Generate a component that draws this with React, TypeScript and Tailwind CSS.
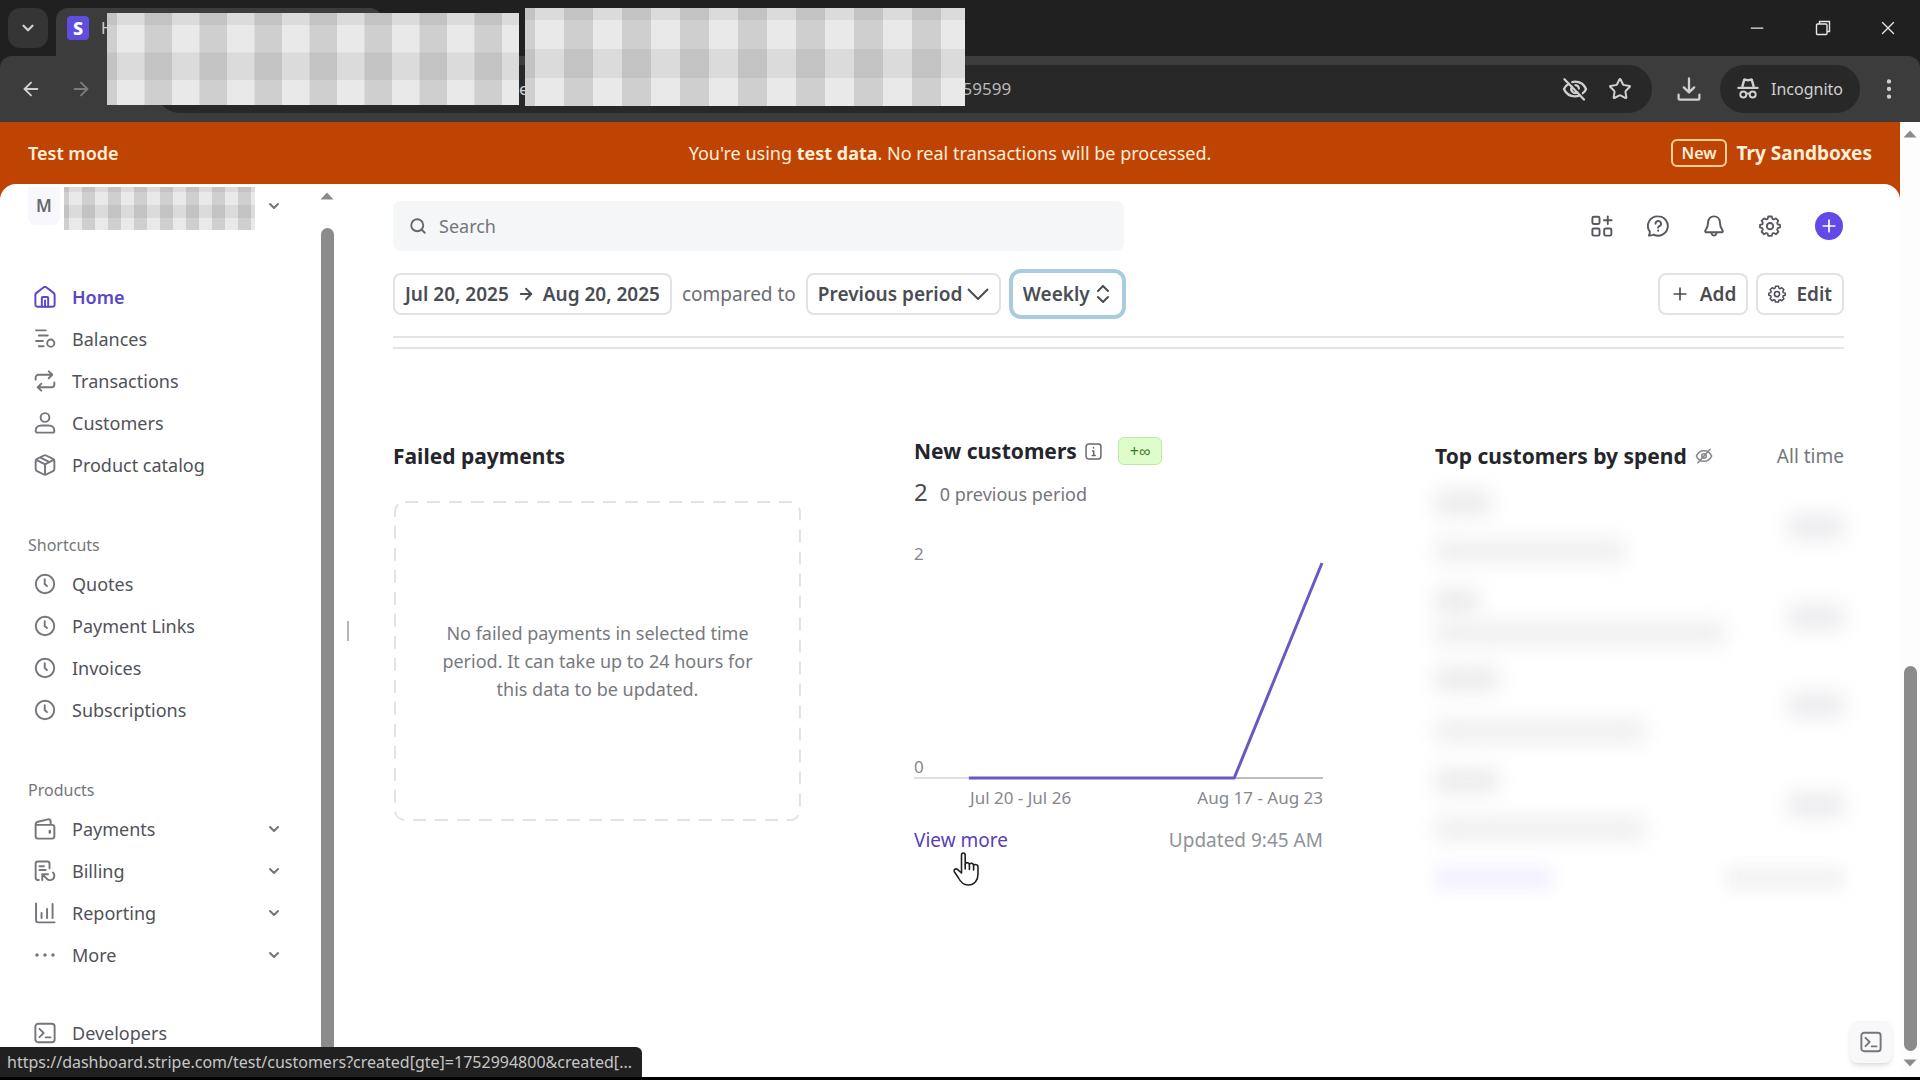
import type { ReactNode } from 'react';
import { ArrowLeft, ArrowRight, ChevronDown, Minus, MoreVertical, Plus, Search, Star, X } from 'lucide-react';

type IconProps = { className?: string; children?: ReactNode };

// base for the 16px outline icons
const Icon = ({ className = 'size-[22px]', children }: IconProps) => (
  <svg
    viewBox="0 0 16 16"
    fill="none"
    stroke="currentColor"
    strokeWidth="1.4"
    strokeLinecap="round"
    strokeLinejoin="round"
    className={`shrink-0 ${className}`}
    aria-hidden="true"
  >
    {children}
  </svg>
);

const HomeIcon = () => (
  <Icon>
    <path d="M1 6.6c0-.6.3-1.2.8-1.6L6.9 1.1a1.8 1.8 0 0 1 2.2 0L14.2 5c.5.4.8 1 .8 1.6V13.5a1.6 1.6 0 0 1-1.6 1.6H2.6A1.6 1.6 0 0 1 1 13.5Z" />
    <path d="M5.7 15V8.7c0-.4.3-.7.7-.7h3.2c.4 0 .7.3.7.7V15M8 10.5V15" />
  </Icon>
);

const BalancesIcon = () => (
  <Icon>
    <path d="M1.5 1.7h7M3.5 5.5h6.500M1.500 9.500h5M3.500 13.300h3.500" />
    <circle cx="12.2" cy="11" r="2.6" />
  </Icon>
);

const TransactionsIcon = () => (
  <Icon>
    <path d="M1.2 7V5.500a2 2 0 0 1 2-2h10M10.700 1l2.600 2.500-2.600 2.500M14.800 9v1.500a2 2 0 0 1-2 2h-10M5.300 15l-2.600-2.500L5.300 10" />
  </Icon>
);

const CustomersIcon = () => (
  <Icon>
    <circle cx="8" cy="4" r="3.2" />
    <path d="M1.2 13.6c0-2.4 1.9-3.8 4.2-3.8h5.2c2.3 0 4.2 1.4 4.2 3.8 0 .8-.5 1.4-1.3 1.4h-11c-.8 0-1.3-.6-1.3-1.4Z" />
  </Icon>
);

const CatalogIcon = () => (
  <Icon>
    <path d="M7.2 1.1a1.8 1.8 0 0 1 1.6 0l5 2.5c.6.3 1 .9 1 1.5v5.8c0 .6-.4 1.2-1 1.5l-5 2.5a1.8 1.8 0 0 1-1.6 0l-5-2.5c-.6-.3-1-.9-1-1.5V5.1c0-.6.4-1.2 1-1.5ZM1.7 4.3 8 7.5l6.3-3.2M8 7.5V15M4.7 2.6l6.3 3.2" />
  </Icon>
);

const ClockIcon = () => (
  <Icon>
    <circle cx="8" cy="8" r="6.7" />
    <path d="M7.8 4.5V8l1.6 1.5" />
  </Icon>
);

const PaymentsIcon = () => (
  <Icon>
    <path d="M1.2 5v8.3c0 .9.7 1.7 1.6 1.7h10.400c.9 0 1.600-.8 1.600-1.700V6.700c0-.9-.7-1.700-1.600-1.700ZM1.200 5c0-1.200.6-2 1.700-2.300L10 1c1.200-.3 2.100.3 2.100 1.500V5" />
    <path d="M11.5 9.5v1" strokeWidth="1.8" />
  </Icon>
);

const BillingIcon = () => (
  <Icon>
    <path d="M3.5 14.5h-.7c-.9 0-1.600-.7-1.600-1.600V2.700c0-.9.700-1.600 1.600-1.600h6.900c.9 0 1.600.7 1.600 1.600V6M4 4.500h3.200M4 7.300h4.500" />
    <path d="M6 14.500v-4.200h4.200M6.300 10.600l3.200 3.200c1.500 1.500 5.300 1 5.300-2.300 0-.9-.3-1.800-1-2.400" />
  </Icon>
);

const ReportingIcon = () => (
  <Icon>
    <path d="M1.5 1v12.3c0 .9.7 1.5 1.5 1.5h12M5.5 8v3.7M9.5 5v6.7M13.5 1.5v10.2" />
  </Icon>
);

const MoreIcon = () => (
  <Icon>
    <g fill="currentColor" stroke="none">
      <circle cx="2.2" cy="8" r="1.3" />
      <circle cx="8" cy="8" r="1.3" />
      <circle cx="13.8" cy="8" r="1.3" />
    </g>
  </Icon>
);

const TerminalIcon = () => (
  <Icon>
    <rect x="1" y="1.3" width="14" height="13.4" rx="2" />
    <path d="m4 5 3 3-3 3M8.5 11.2H12" />
  </Icon>
);

const GearIcon = ({ className }: IconProps) => (
  <Icon className={className}>
    <path
      strokeWidth="1.3"
      d="M6.7 1.1h2.6l.4 1.7 1.1.5 1.5-.9 1.8 1.8-.9 1.5.4 1.1 1.7.4v1.9l-1.7.5-.4 1.1.9 1.5-1.8 1.8-1.5-.9-1.1.4-.4 1.7H6.700l-.4-1.700-1.100-.4-1.500.9-1.800-1.800.9-1.500-.4-1.100-1.700-.5V7.200l1.700-.4.4-1.100-.9-1.500 1.800-1.800 1.500.9 1.100-.5Z"
    />
    <circle cx="8" cy="8.1" r="2.3" />
  </Icon>
);

const AppsIcon = () => (
  <Icon>
    <rect x="1" y="1.3" width="5.2" height="5.2" rx="1" />
    <rect x="1" y="9.8" width="5.2" height="5.2" rx="1" />
    <rect x="9.6" y="9.8" width="5.2" height="5.2" rx="1" />
    <path d="M12.2 1v5.6M9.4 3.8h5.6" />
  </Icon>
);

const HelpIcon = () => (
  <Icon>
    <path d="M8.2 1a7 7 0 1 1-3.3 13.2c-.8.5-2.200.8-3.500.7.500-.9.700-1.700.7-2.700A7 7 0 0 1 8.200 1Z" />
    <path d="M6.2 6.3a2 2 0 1 1 2.9 1.8c-.6.3-1 .6-1 1.1M8.1 11.3v.1" />
  </Icon>
);

const BellIcon = () => (
  <Icon>
    <path d="M8 1c2.7 0 4.3 2 4.3 4.5 0 3 .8 4.3 1.9 5.6.5.6.2 1.4-.6 1.4H2.4c-.8 0-1.1-.8-.6-1.4 1.1-1.3 1.9-2.6 1.9-5.6C3.7 3 5.3 1 8 1ZM6.2 13.5c.3.9.9 1.5 1.8 1.5s1.5-.6 1.8-1.5" />
  </Icon>
);

const HiddenIcon = ({ className }: IconProps) => (
  <Icon className={className}>
    <path d="M1.2 8C2.5 5 5 3.3 8 3.3S13.5 5 14.8 8c-1.3 3-3.8 4.7-6.8 4.7S2.5 11 1.2 8Z" />
    <circle cx="8" cy="8" r="2" />
    <path d="m2.5 14 11-12" />
  </Icon>
);

const EyeOffIcon = () => (
  <Icon className="size-[26px]">
    <path d="M4.2 4.8C2.8 5.6 1.8 6.7 1.2 8c1.2 2.8 3.8 4.5 6.8 4.5 1 0 2-.2 2.9-.6M6.3 3.7c.5-.1 1.1-.2 1.7-.2 3 0 5.6 1.7 6.8 4.5-.4 1-1.1 1.9-2 2.6M6.2 6.6a2.4 2.4 0 0 0 3.3 3.4M8.3 5.6c1.2.1 2 .9 2.1 2.1M1.5 2l12 12.5" />
  </Icon>
);

const DownloadIcon = () => (
  <Icon className="size-[26px]">
    <path d="M8 1.5v8.3M4.8 7 8 10.1 11.2 7M1.6 11.5v2.3c0 .5.3.8.8.8h11.2c.5 0 .8-.3.8-.8v-2.3" />
  </Icon>
);

const IncognitoIcon = () => (
  <Icon className="size-[22px]">
    <path d="M4 5.8 5.1 1.7c.1-.5.5-.7 1-.5L8 1.7l1.9-.5c.5-.2.9 0 1 .5L12 5.800" strokeWidth="1.8" />
    <path d="M1 7.2h14" strokeWidth="1.6" />
    <circle cx="4.6" cy="12" r="2.2" />
    <circle cx="11.4" cy="12" r="2.2" />
    <path d="M6.8 11.6c.7-.5 1.7-.5 2.4 0" />
  </Icon>
);

const Chevron = ({ className = '' }: IconProps) => (
  <ChevronDown size={16} strokeWidth={3} className={`shrink-0 ${className}`} aria-hidden="true" />
);

const Checker = ({ id, size, x, y, className }: { id: string; size: number; x: number; y: number; className: string }) => (
  <svg className={className} aria-hidden="true">
    <defs>
      <pattern id={id} width={size} height={size} x={x} y={y} patternUnits="userSpaceOnUse">
        <rect width={size} height={size} fill="#e9e9e9" />
        <rect x={size / 2} width={size / 2} height={size} fill="#cfcfcf" />
        <rect y={size / 2} width={size} height={size / 2} fill="#000" fillOpacity="0.06" />
      </pattern>
    </defs>
    <rect width="100%" height="100%" fill={`url(#${id})`} />
  </svg>
);

const ScrollArrow = ({ down = false }: { down?: boolean }) => (
  <svg viewBox="0 0 14 8" className={`h-2 w-[14px] shrink-0 fill-[#8b8b8b] ${down ? 'rotate-180' : ''}`} aria-hidden="true">
    <path d="M7 0.5 13.5 7.5H0.5Z" />
  </svg>
);

const mainNav = [
  { label: 'Home', icon: HomeIcon, active: true },
  { label: 'Balances', icon: BalancesIcon },
  { label: 'Transactions', icon: TransactionsIcon },
  { label: 'Customers', icon: CustomersIcon },
  { label: 'Product catalog', icon: CatalogIcon },
];

const shortcuts = [
  { label: 'Quotes', icon: ClockIcon },
  { label: 'Payment Links', icon: ClockIcon },
  { label: 'Invoices', icon: ClockIcon },
  { label: 'Subscriptions', icon: ClockIcon },
];

const products = [
  { label: 'Payments', icon: PaymentsIcon, expandable: true },
  { label: 'Billing', icon: BillingIcon, expandable: true },
  { label: 'Reporting', icon: ReportingIcon, expandable: true },
  { label: 'More', icon: MoreIcon, expandable: true },
];

type NavItem = { label: string; icon: () => ReactNode; active?: boolean; expandable?: boolean };

const NavList = ({ items }: { items: NavItem[] }) => (
  <ul>
    {items.map((item) => (
      <li key={item.label}>
        <a
          href="#"
          className={`flex h-[42px] items-center pr-[38px] pl-[34px] text-[18px] ${
            item.active ? 'font-semibold text-[#5b45c9]' : 'text-[#505259]'
          }`}
        >
          <span className={item.active ? '' : 'text-[#74767c]'}>
            <item.icon />
          </span>
          <span className="ml-4 flex-1">{item.label}</span>
          {item.expandable && <Chevron className="text-[#74767c]" />}
        </a>
      </li>
    ))}
  </ul>
);

const NavHeading = ({ children }: { children: ReactNode }) => (
  <h2 className="mt-10 flex h-[37px] items-center pl-7 text-[16px] text-[#74767c]">{children}</h2>
);

const BrowserChrome = () => (
  <header className="relative shrink-0 bg-[#202020] text-[#d0d0d0]">
    <div className="flex h-14 items-start pt-2">
      <button aria-label="Search tabs" className="ml-2 flex size-10 items-center justify-center rounded-xl bg-[#353535]">
        <ChevronDown size={18} strokeWidth={3} />
      </button>
      <div className="ml-2 flex h-12 w-[326px] items-center rounded-t-xl bg-[#3c3c3c] pb-2 pl-[11px]">
        <span className="flex h-6 w-[22px] items-center justify-center rounded-sm bg-[#5f4de0] text-lg font-extrabold text-white">
          S
        </span>
        <span className="ml-3 text-[16px]">H</span>
      </div>
      <div className="ml-auto flex h-10 items-center text-[#e6e6e6]">
        <button aria-label="Minimize" className="flex w-[66px] justify-center">
          <Minus size={20} strokeWidth={1.5} />
        </button>
        <button aria-label="Restore" className="flex w-[66px] justify-center">
          <svg viewBox="0 0 16 16" className="size-4" fill="none" stroke="currentColor" strokeWidth="1.4">
            <rect x="1.5" y="4" width="10.5" height="10.5" rx="1" />
            <path d="M4.5 4V1.5h10v10H12" />
          </svg>
        </button>
        <button aria-label="Close" className="flex w-16 justify-center">
          <X size={22} strokeWidth={1.5} />
        </button>
      </div>
    </div>
    <div className="flex h-[66px] items-center rounded-t-xl bg-[#3c3c3c]">
      <button aria-label="Back" className="ml-5 text-[#d0d0d0]">
        <ArrowLeft size={22} />
      </button>
      <button aria-label="Forward" className="ml-7 text-[#7c7c7c]">
        <ArrowRight size={22} />
      </button>
      <div className="ml-16 flex h-12 flex-1 items-center rounded-full bg-[#282828] pr-5">
        <span className="ml-[363px] text-[17px]">e</span>
        <input
          aria-label="Address"
          defaultValue="59599"
          className="ml-[434px] min-w-0 flex-1 bg-transparent text-[17px] text-[#b9b9b9] outline-none"
        />
        <button aria-label="Third-party cookies blocked">
          <EyeOffIcon />
        </button>
        <button aria-label="Bookmark" className="ml-5">
          <Star size={24} strokeWidth={2} />
        </button>
      </div>
      <button aria-label="Downloads" className="mr-[18px] ml-6">
        <DownloadIcon />
      </button>
      <button className="flex h-12 items-center gap-3 rounded-full bg-[#282828] px-[17px] text-[16px]">
        <IncognitoIcon />
        Incognito
      </button>
      <button aria-label="Menu" className="mr-[18px] ml-4">
        <MoreVertical size={26} strokeWidth={2} />
      </button>
    </div>
    <Checker id="mask-a" size={55} x={10} y={12} className="absolute top-[13px] left-[107px] h-[92px] w-[412px]" />
    <Checker id="mask-b" size={58} x={10} y={12} className="absolute top-2 left-[525px] h-[98px] w-[440px]" />
  </header>
);

const TestBanner = () => (
  <div className="flex h-[62px] shrink-0 items-center justify-between bg-[#bf4404] px-7 text-[18px] text-[#ffeed8]">
    <strong className="flex-1 font-semibold">Test mode</strong>
    <p>
      You're using <strong className="font-bold">test data</strong>. No real transactions will be processed.
    </p>
    <div className="flex flex-1 items-center justify-end gap-[10px]">
      <span className="rounded-md border-2 border-[#ffcf9c] px-2 text-[16px] leading-6 font-semibold">New</span>
      <a href="#" className="text-[19px] font-bold">
        Try Sandboxes
      </a>
    </div>
  </div>
);

const Sidebar = () => (
  <div className="flex shrink-0 overflow-hidden">
    <nav aria-label="Main" className="w-[320px]">
      <button aria-label="Switch account" className="flex w-full items-start pt-[3px] pl-7">
        <span className="flex h-[38px] w-8 items-center justify-center rounded-b-lg bg-[#f8f7fb] text-[17px] font-semibold text-[#66686e]">
          M
        </span>
        <Checker id="mask-c" size={26} x={5} y={5} className="ml-1 h-[43px] w-[191px]" />
        <span className="mt-[11px] ml-[11px] text-[#74767c]">
          <Chevron />
        </span>
      </button>
      <div className="pt-[46px]">
        <NavList items={mainNav} />
        <NavHeading>Shortcuts</NavHeading>
        <NavList items={shortcuts} />
        <NavHeading>Products</NavHeading>
        <NavList items={products} />
        <div className="mt-9">
          <NavList items={[{ label: 'Developers', icon: TerminalIcon }]} />
        </div>
      </div>
    </nav>
    <div className="flex w-[14px] flex-col items-center pt-2">
      <ScrollArrow />
      <div className="mt-7 w-[13px] flex-1 rounded-t-full bg-[#8b8b8b]" />
    </div>
    <div className="flex w-7 items-center justify-center">
      <div className="h-5 w-[2px] bg-[#b5b5b8]" />
    </div>
  </div>
);

const Toolbar = () => (
  <>
    <div className="flex items-center justify-between">
      <label className="flex h-[50px] w-[50.4%] items-center gap-3 rounded-lg bg-[#f5f6f8] px-4 text-[#66686e]">
        <Search size={18} strokeWidth={2.5} className="shrink-0" />
        <input
          type="search"
          placeholder="Search"
          aria-label="Search"
          className="min-w-0 flex-1 bg-transparent text-[18px] outline-none placeholder:text-[#74767c]"
        />
      </label>
      <div className="flex items-center gap-[34px] pr-px text-[#56585e]">
        <button aria-label="Apps"><AppsIcon /></button>
        <button aria-label="Help"><HelpIcon /></button>
        <button aria-label="Notifications"><BellIcon /></button>
        <button aria-label="Settings"><GearIcon /></button>
        <button aria-label="Create" className="flex size-7 items-center justify-center rounded-full bg-[#6349e8] text-white">
          <Plus size={20} strokeWidth={2} />
        </button>
      </div>
    </div>
    <div className="mt-[22px] flex h-[42px] items-center text-[19px] text-[#4a4c53]">
      <button className="flex h-full items-center gap-2 rounded-lg border-2 border-[#e2e2e5] px-[10px] font-semibold whitespace-nowrap">
        Jul 20, 2025 <ArrowRight size={18} strokeWidth={2.5} /> Aug 20, 2025
      </button>
      <span className="mx-[10px] text-[#6b6d73]">compared to</span>
      <label className="relative h-full">
        <select
          aria-label="Comparison"
          className="h-full appearance-none rounded-lg border-2 border-[#e2e2e5] bg-white pr-9 pl-[10px] font-semibold"
        >
          <option>Previous period</option>
        </select>
        <svg viewBox="0 0 22 12" className="pointer-events-none absolute top-[15px] right-3 h-3 w-[22px]" fill="none" stroke="currentColor" strokeWidth="2">
          <path d="m1 1 10 10L21 1" />
        </svg>
      </label>
      <label className="relative ml-3 h-full">
        <select
          aria-label="Interval"
          className="h-full appearance-none rounded-lg bg-white pr-8 pl-[10px] font-semibold ring-4 ring-[#a9cbdf] outline-none"
        >
          <option>Weekly</option>
        </select>
        <svg viewBox="0 0 14 18" className="pointer-events-none absolute top-3 right-3 h-[18px] w-[14px]" fill="none" stroke="currentColor" strokeWidth="2" strokeLinecap="round">
          <path d="m2 6 5-5 5 5M2 12l5 5 5-5" />
        </svg>
      </label>
      <div className="ml-auto flex h-full gap-2 font-semibold">
        <button className="flex items-center gap-[10px] rounded-lg border-2 border-[#e2e2e5] px-[10px]">
          <Plus size={20} strokeWidth={2} />
          Add
        </button>
        <button className="flex items-center gap-[10px] rounded-lg border-2 border-[#e2e2e5] px-[10px]">
          <GearIcon className="size-[18px]" />
          Edit
        </button>
      </div>
    </div>
    <div className="mt-[21px] h-[13px] border-y-2 border-[#e4e4e6]" />
  </>
);

const FailedPayments = () => (
  <section>
    <h3 className="mt-[5px] text-[21px] leading-7 font-bold text-[#25262b]">Failed payments</h3>
    <div className="relative mt-[31px] flex h-[320px] items-center justify-center">
      <svg className="absolute inset-0 size-full" aria-hidden="true">
        <rect x="2" y="1" width="99%" height="318" rx="10" fill="none" stroke="#e3e3e5" strokeWidth="2" strokeDasharray="13 9" />
      </svg>
      <p className="max-w-[336px] text-center text-[18px] leading-7 text-[#777980]">
        No failed payments in selected time period. It can take up to 24 hours for this data to be updated.
      </p>
    </div>
  </section>
);

const NewCustomers = () => (
  <section>
    <div className="flex h-7 items-center">
      <h3 className="text-[21px] leading-7 font-bold text-[#25262b]">New customers</h3>
      <Icon className="ml-2 size-[17px] text-[#66686e]">
        <rect x="1" y="1" width="14" height="14" rx="2.5" />
        <path d="M7 7.5h1.2v4M6.8 11.7h2.8M8 4.3v.3" />
      </Icon>
      <span className="ml-4 rounded-md border border-[#bfe8a8] bg-[#defdca] px-[11px] text-[16px] leading-[26px] text-[#3f7a2c]">
        +∞
      </span>
    </div>
    <p className="mt-[9px] flex items-baseline gap-3 leading-9">
      <span className="text-[24px] text-[#4a4c53]">2</span>
      <span className="text-[18px] text-[#74767c]">0 previous period</span>
    </p>
    <div className="mt-8 text-[17px] leading-5 text-[#85878d]">
      <div className="grid h-[236px]">
        <div className="col-start-1 row-start-1 flex flex-col justify-between pb-[3px]">
          <span>2</span>
          <span>0</span>
        </div>
        <svg viewBox="0 0 410 236" preserveAspectRatio="none" className="col-start-1 row-start-1 h-[236px] w-full overflow-visible" fill="none">
          <path d="M0 234h56" stroke="#e0e0e2" strokeWidth="2" />
          <path d="M320 234h90" stroke="#bdbdc0" strokeWidth="2" />
          <path d="M55 234h266L409 19" stroke="#6b58c4" strokeWidth="3" strokeLinejoin="round" />
        </svg>
      </div>
      <div className="mt-2 flex justify-between pl-14">
        <span>Jul 20 - Jul 26</span>
        <span>Aug 17 - Aug 23</span>
      </div>
    </div>
    <div className="mt-[18px] flex justify-between text-[19px] leading-7">
      <a href="#" className="text-[#5b3fb5]">
        View more
      </a>
      <span className="text-[#909298]">Updated 9:45 AM</span>
    </div>
  </section>
);

// redacted customer rows
const hiddenRows = [
  { row: 'h-[90px]', gap: 'gap-6', name: 'w-14', email: 'w-[190px]' },
  { row: 'h-[90px]', gap: 'gap-2', name: 'w-11', email: 'w-[290px]' },
  { row: 'h-[86px]', gap: 'gap-7', name: 'w-16', email: 'w-[210px]' },
  { row: 'h-[114px]', gap: 'gap-6', name: 'w-16', email: 'w-[210px]' },
];

const TopCustomers = () => (
  <section>
    <div className="mt-[5px] flex items-center">
      <h3 className="text-[21px] leading-7 font-bold whitespace-nowrap text-[#25262b]">Top customers by spend</h3>
      <HiddenIcon className="ml-2 size-[18px] text-[#85878d]" />
      <span className="ml-auto text-[19px] leading-7 text-[#74767c]">All time</span>
    </div>
    <div className="mt-3" aria-hidden="true">
      {hiddenRows.map((item, i) => (
        <div key={i} className={`flex items-center justify-between ${item.row}`}>
          <div className={`flex flex-col ${item.gap}`}>
            <div className={`h-6 bg-[#ebebed] blur-[10px] ${item.name}`} />
            <div className={`h-6 bg-[#efeff0] blur-[10px] ${item.email}`} />
          </div>
          <div className="h-6 w-14 bg-[#ebebee] blur-[10px]" />
        </div>
      ))}
      <div className="mt-1 flex justify-between">
        <div className="h-6 w-[118px] bg-[#f3f2fe] blur-[8px]" />
        <div className="h-6 w-[118px] bg-[#f3f3f4] blur-[8px]" />
      </div>
    </div>
  </section>
);

const HandCursor = () => (
  <svg viewBox="0 0 26 34" className="absolute top-[852px] left-[953px] h-[34px] w-[26px]" fill="#fff" stroke="#222" strokeWidth="1.6" strokeLinejoin="round" strokeLinecap="round" aria-hidden="true">
    <path d="M8.5 21V3.5C8.5 1.9 9.3 1 10.3 1s1.9.9 1.9 2.5V13c0-3.2 4.2-3 4.2 0 0-2.5 4.2-2.3 4.2 1 0-2.2 4.4-2 4.4 1.2V22c0 6-3.2 11-10 11-5 0-7.5-3-9.8-7.5L1.5 20c-1.3-2.4 1.3-4.2 3.3-2.3Z" />
    <path d="M12.2 13v4M16.4 13.5v4M20.6 14.5v3.5" fill="none" />
  </svg>
);

export default function App() {
  return (
    <div className="relative flex h-screen flex-col overflow-hidden border-b-[3px] border-black bg-white font-['Noto_Sans',sans-serif]">
      <BrowserChrome />
      <div className="flex min-h-0 flex-1">
        <div className="flex min-w-0 flex-1 flex-col bg-[#bf4404]">
          <TestBanner />
          <div className="flex min-h-0 flex-1 rounded-t-2xl bg-white">
            <Sidebar />
            <main className="min-w-0 flex-1 overflow-hidden pt-[17px] pr-14 pl-[31px]">
              <Toolbar />
              <div className="mt-[88px] grid grid-cols-3 gap-28">
                <FailedPayments />
                <NewCustomers />
                <TopCustomers />
              </div>
            </main>
          </div>
        </div>
        <div className="flex w-5 flex-col items-center bg-[#fdfdfd] pt-2 pb-[10px]">
          <ScrollArrow />
          <div className="mt-[528px] w-[13px] flex-1 rounded-full bg-[#8b8b8b]" />
          <div className="mt-2">
            <ScrollArrow down />
          </div>
        </div>
      </div>
      <HandCursor />
      <button
        aria-label="Open shell"
        className="absolute right-7 bottom-[14px] flex size-[42px] items-center justify-center rounded-lg bg-[#f8f8fa] text-[#74767c] shadow-md"
      >
        <TerminalIcon />
      </button>
      <div className="absolute bottom-0 left-0 flex h-[30px] items-center rounded-tr-md bg-[#202020] pr-[10px] pl-[7px] text-[16px] text-[#c6c6c6]">
        https://dashboard.stripe.com/test/customers?created[gte]=1752994800&amp;created[...
      </div>
    </div>
  );
}
